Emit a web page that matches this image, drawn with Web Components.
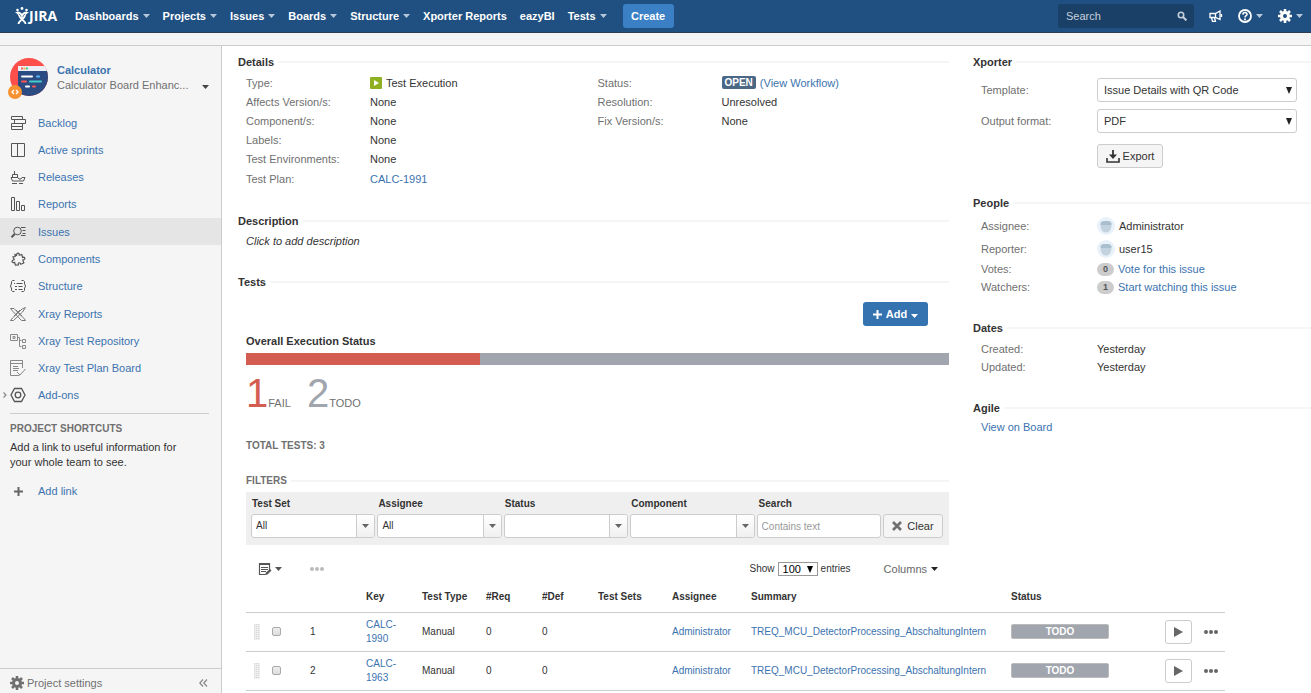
<!DOCTYPE html>
<html lang="en">
<head>
<meta charset="utf-8">
<title>Calculator - Test Execution</title>
<style>
  :root { --link: #3b73af; --text: #333; --muted: #707070; --line: #ccc; --panel: #f5f5f5; --rule: #f5f5f5; }
  body { margin: 0; font: 11px/16px "Liberation Sans", Arial, sans-serif; color: var(--text); background: #fff; }
</style>
</head>
<body>
<jira-app></jira-app>
<script>
const define = (name, html) => customElements.define(name, class extends HTMLElement {
  connectedCallback() {
    if (this.shadowRoot) return;
    const root = this.attachShadow({ mode: "open" });
    root.innerHTML = `<style>*{box-sizing:border-box} a{color:var(--link);text-decoration:none}
      button,input,select{font:inherit;color:inherit;margin:0}</style>` + (typeof html === "function" ? html(this) : html);
  }
});

/* ---------- icons ---------- */
const ICONS = {
  caret: [7, 4, '<path d="M0 0h7L3.500 4z" fill="currentColor"/>'],
  triangle: [6, 7, '<path d="M0 0h6L3 7z" fill="currentColor"/>'],
  backlog: [16, 16, '<path d="M1.500 1.500h11v3h-11zM4.500 4.500h11v4h-11zM1.500 8.500h11v3h-11zM1.500 11.500h11v3h-11z"/>'],
  board: [16, 16, '<path d="M1.500 1.500h13v13h-13zM7.500 1.500v13"/>'],
  ship: [16, 16, '<path d="M4.500 2v3M2.500 8.500V5.500h5v3M1 8.500h7l1 1.500h2l1-1.500h3l-1.500 3.500H2.500zM2 14.500h5M9 14.500h4"/>'],
  bars: [16, 16, '<path d="M1.500 1.500h3v13h-3zM6.500 5.500h3v9h-3zM11.500 9.500h3v5h-3z"/>'],
  issues: [16, 16, '<circle cx="7.500" cy="7" r="3.800"/><path d="M4.700 10L1.500 13.200" stroke-width="2"/><path d="M11 3.500h4.500M12.500 6.500h3M12.500 9.500h3M11 11.500h4.500"/>'],
  puzzle: [16, 16, '<path d="M5 3.500l1.500.8L7 2.500a1.300 1.300 0 0 1 2 0l.3 1.800 2.500-.8.800 3 1.200-.3a1.300 1.300 0 0 1 .5 2.300l-1.500.5 1 3-3 1.300-.6-1.200a1.200 1.200 0 0 0-2 .5l.2 1.400-3 .2-.7-2.700-1.500.2a1.300 1.300 0 0 1-.5-2.400l1.500-.6-1.200-2.900 2.200-.3z" stroke-width="1.200"/>'],
  structure: [16, 16, '<path d="M4.500 2.500h-2l-1 1v2.500l-.800 1v2l.8 1v2.500l1 1h2M11.500 2.500h2l1 1v2.500l.8 1v2l-.8 1v2.500l-1 1h-2M6.500 5.500h6M8.500 8.500h4M8.500 11.500h4M4 5.500h1M5 8.500h2M5 11.500h2"/>'],
  xray: [16, 16, '<g stroke="#777"><path d="M.500 2.500h3.500L14.500 13l1 1.500h-4L3 5.500zM15.500 1.500L12 3 2.500 12l-2 2.500h3L12.500 6z"/><path d="M6 4l6 6M4 10l6-6"/></g>'],
  repo: [16, 16, '<g stroke="#888"><path d="M.500 1.500h7v6h-7zM3 3.500h2v2H3zM7.500 4.500h2v9h2M9.500 7.500h2M12.500 6.500h3v3h-3zM12.500 12.500h3v3h-3z"/></g>'],
  plan: [16, 16, '<g stroke="#888"><path d="M12.500 8V.500H.500v15h9M.500 3.500h12M3 6.500h5M3 8.500h6M3 10.500h5M7 12l3 3 5.500-6"/></g>'],
  addons: [16, 16, '<path d="M4.500 1.500h7l3.500 6.500-3.500 6.500h-7L1 8z" stroke-width="1.300"/><circle cx="8" cy="8" r="2.800" stroke-width="1.300"/>'],
  gear: [14, 14, '<circle cx="7" cy="7" r="3.500" stroke="currentColor" stroke-width="3"/><g stroke="currentColor" stroke-width="2.600"><path d="M7 0v3M7 11v3M0 7h3M11 7h3M2 2l2 2M10 10l2 2M12 2l-2 2M4 10l-2 2"/></g>'],
  plus: [9, 9, '<path d="M4.500 0v9M0 4.500h9" stroke="currentColor" stroke-width="2"/>'],
  cross: [10, 10, '<path d="M1 1l8 8M9 1L1 9" stroke="currentColor" stroke-width="2.600"/>'],
  search: [10, 10, '<circle cx="4" cy="4" r="2.700" stroke="currentColor" stroke-width="1.600"/><path d="M6 6l3.400 3.400" stroke="currentColor" stroke-width="2"/>'],
  horn: [14, 12, '<path d="M1 3.500h5.500L11 1v8.500L6.500 7.500H1zM2.500 7.500l1 4h3l-1-4M6.500 3.500v4M12.500 4v3" stroke="currentColor" stroke-width="1.300"/>'],
  help: [14, 14, '<circle cx="7" cy="7" r="6" stroke="currentColor" stroke-width="1.800"/><path d="M4.900 5.600C5 2.700 9.300 3 9 5.500 8.800 6.800 7 6.700 7 8.500" stroke="currentColor" stroke-width="1.600"/><path d="M6.100 9.600h1.800v1.600H6.100z" fill="currentColor"/>'],
  download: [14, 13, '<path d="M1 8v4h12V8" stroke="currentColor" stroke-width="1.600"/><path d="M7 0v7" stroke="currentColor" stroke-width="1.800"/><path d="M3 4.500h8L7 9z" fill="currentColor"/>'],
  exec: [12, 12, '<rect width="12" height="12" rx="1" fill="#8eb021"/><path d="M4 3l5 3-5 3z" fill="#fff"/>'],
  avatar: [18, 18, '<circle cx="9" cy="9" r="9" fill="#e9f1fa"/><path d="M3.500 8h11c0 4-2 7.500-5.500 7.500S3.500 12 3.500 8z" fill="#c3d2df"/><path d="M3.500 8V6Q4.500 4 7 4h4q2.500 0 3.500 2v2z" fill="#a9bfce"/>'],
  play: [9, 10, '<path d="M0 0l9 5-9 5z" fill="currentColor"/>'],
  dots: [14, 4, '<g fill="currentColor"><circle cx="2" cy="2" r="2"/><circle cx="7" cy="2" r="2"/><circle cx="12" cy="2" r="2"/></g>'],
  edit: [14, 14, '<path d="M11.500 8V1.500h-10v11h6M1 2.500h11M3 5.500h7M3 7.500h7M3 9.500h5" stroke="currentColor" stroke-width="1.200"/><path d="M7 13l1-2.500L12 7l1.500 1.500-4 4z" fill="currentColor"/>'],
  grip: [6, 16, '<path d="M0 0h6v16H0z" fill="#eee"/><path d="M0 .5h6M0 2.500h6M0 4.500h6M0 6.500h6M0 8.500h6M0 10.500h6M0 12.500h6M0 14.500h6" stroke="#d6d6d6" stroke-dasharray="1 1"/>'],
  chevron: [4, 6, '<path d="M.500.500L3 3 .5 5.500" stroke="#888" stroke-width="1.200"/>'],
  collapse: [9, 8, '<path d="M4 .500L.800 4 4 7.500M8 .500L4.800 4 8 7.500" stroke="#888" stroke-width="1.200"/>'],
  project: [40, 44, `<defs><clipPath id="c"><circle cx="21" cy="20" r="19"/></clipPath></defs>
    <g clip-path="url(#c)"><path d="M0 0h42v42H0z" fill="#ff4f4a"/><path d="M10 13h32v30H10z" fill="#2a4c82"/><path d="M10 9h32v5H10z" fill="#eceff4"/></g>
    <path d="M13 11.500h2" stroke="#f66" stroke-width="2"/><path d="M15.500 11.500h2" stroke="#fa4" stroke-width="2"/><path d="M18 11.500h2" stroke="#4c9" stroke-width="2"/>
    <g stroke-width="2" stroke-linecap="round"><path d="M14 19.500h10" stroke="#fff"/><path d="M29 19.500h2" stroke="#5bf"/><path d="M14 24.500h4" stroke="#f55"/><path d="M22 24.500h11" stroke="#4cc"/><path d="M18 29.500h3" stroke="#fff"/><path d="M25 29.500h2" stroke="#f55"/></g>
    <circle cx="7" cy="35" r="7" fill="#f79232"/><path d="M6 33L4 35l2 2M8 33l2 2-2 2" stroke="#fff" stroke-width="1.300"/>`],
  logo: [14, 18, '<g stroke="#fff"><path d="M2 5.500c3 0 4.500 2 5 3.500.5-1.500 2-3.500 5-3.500M3.500 17c0-3.500 6.500-5 6.500-9M10.500 17c0-3.500-6-5-6.500-9" stroke-width="1.800"/></g><g fill="#fff"><circle cx="2.500" cy="3" r="1.300"/><circle cx="7" cy="1.500" r="1.400"/><circle cx="11.500" cy="3" r="1.300"/><path d="M0 5h3l2 4.500zM14 5h-3L9 9.500z"/></g>'],
};
define("ui-icon", el => {
  const [w, h, body] = ICONS[el.getAttribute("name")];
  return `<style>:host{display:inline-flex;flex:none}svg{display:block}</style>
  <svg width="${w}" height="${h}" viewBox="0 0 ${w} ${h}" fill="none" stroke-width="1" aria-hidden="true"><g ${/currentColor|<defs/.test(body) || /fill="#/.test(body) ? "" : 'stroke="#555"'}>${body}</g></svg>`;
});
const icon = n => `<ui-icon name="${n}"></ui-icon>`;

/* ---------- header ---------- */
define("nav-item", el => `<style>:host{display:block}
  a{display:flex;align-items:center;gap:4px;color:#fff;font-weight:bold;white-space:nowrap}
  ui-icon{color:#b5c7d9}</style>
  <a href="#"><slot></slot>${el.hasAttribute("menu") ? icon("caret") : ""}</a>`);

define("app-header", `<style>
  :host{display:block;background:#205081;border-bottom:1px solid #2e3d54;color:#fff}
  header{display:flex;align-items:center;height:32px;padding:0 8px 0 15px}
  .logo{display:flex;align-items:center;width:44px;margin-right:16px;color:#fff;font:bold 14px/18px "Open Sans","Liberation Sans",sans-serif}
  nav{display:flex;gap:13px}
  .create{height:24px;width:51px;margin-left:16px;padding:0;border:0;border-radius:3px;background:#3b7fc4;color:#fff;font-weight:bold}
  .search{display:flex;align-items:center;width:136px;height:24px;margin-left:auto;padding:0 7px 0 8px;border-radius:3px;background:#1a4067;color:#c5d0db}
  .search input{flex:1;min-width:0;padding:0;border:0;background:none;outline:0}
  .search input::placeholder{color:#c5d0db;opacity:1}
  .tool{display:flex;align-items:center;gap:4px;padding:0;border:0;background:none;color:#fff;margin-left:15px}
  .tool .c{color:#b5c7d9}
  </style>
  <header>
    <a class="logo" href="#">${icon("logo")}JIRA</a>
    <nav><nav-item menu>Dashboards</nav-item><nav-item menu>Projects</nav-item><nav-item menu>Issues</nav-item><nav-item menu>Boards</nav-item><nav-item menu>Structure</nav-item><nav-item>Xporter Reports</nav-item><nav-item>eazyBI</nav-item><nav-item menu>Tests</nav-item></nav>
    <button class="create" type="button">Create</button>
    <label class="search"><input type="text" placeholder="Search" aria-label="Search">${icon("search")}</label>
    <button class="tool" type="button" aria-label="Feedback">${icon("horn")}</button>
    <button class="tool" type="button" aria-label="Help">${icon("help")}<ui-icon class="c" name="caret"></ui-icon></button>
    <button class="tool" type="button" aria-label="Administration">${icon("gear")}<ui-icon class="c" name="caret"></ui-icon></button>
  </header>`);

/* ---------- sidebar ---------- */
define("side-item", el => `<style>
  :host{display:block}
  :host([selected]){background:#e5e5e5}
  a{position:relative;display:flex;align-items:center;gap:12px;height:100%;padding-left:10px}
  .more{position:absolute;left:3px}
  </style><a href="#">${el.hasAttribute("expandable") ? '<ui-icon class="more" name="chevron"></ui-icon>' : ""}${icon(el.getAttribute("icon"))}<slot></slot></a>`);

define("project-sidebar", `<style>
  :host{display:flex;flex-direction:column;background:var(--panel);border-right:1px solid var(--line)}
  .head{display:flex;align-items:center;padding:11px 12px 8px 8px;line-height:15px}
  .names{flex:1;min-width:0;margin-left:9px;padding-bottom:2px;color:var(--muted);white-space:nowrap}
  .names a{display:block;font-weight:bold}
  .head button{display:flex;padding:16px 0 0;border:0;background:none;color:#444}
  nav{display:grid;grid-auto-rows:1fr;height:300px}
  .short{margin:4px 12px 0 10px;padding-top:7px;border-top:1px solid var(--line)}
  h2{margin:0 0 3px;font-size:10px;line-height:16px;color:var(--muted)}
  p{margin:0;line-height:15px}
  .add{display:flex;align-items:center;gap:15px;margin-top:13px;padding-left:4px}
  .add ui-icon{color:#666}
  footer{display:flex;align-items:center;height:25px;margin-top:auto;padding:4px 13px 0 10px;border-top:1px solid var(--line);color:var(--muted)}
  footer a{display:flex;align-items:center;gap:3px;color:var(--muted)}
  footer button{display:flex;margin-left:auto;padding:0;border:0;background:none}
  </style>
  <div class="head">${icon("project")}<div class="names"><a href="#">Calculator</a>Calculator Board Enhanc...</div><button type="button" aria-label="Switch board">${icon("caret")}</button></div>
  <nav>
    <side-item icon="backlog">Backlog</side-item><side-item icon="board">Active sprints</side-item><side-item icon="ship">Releases</side-item>
    <side-item icon="bars">Reports</side-item><side-item icon="issues" selected>Issues</side-item><side-item icon="puzzle">Components</side-item>
    <side-item icon="structure">Structure</side-item><side-item icon="xray">Xray Reports</side-item><side-item icon="repo">Xray Test Repository</side-item>
    <side-item icon="plan">Xray Test Plan Board</side-item><side-item icon="addons" expandable>Add-ons</side-item>
  </nav>
  <section class="short"><h2>PROJECT SHORTCUTS</h2><p>Add a link to useful information for<br>your whole team to see.</p>
    <a class="add" href="#">${icon("plus")}Add link</a></section>
  <footer><a href="#">${icon("gear")}Project settings</a><button type="button" aria-label="Collapse sidebar">${icon("collapse")}</button></footer>`);

/* ---------- issue content ---------- */
define("issue-section", el => `<style>
  :host{display:block;margin-bottom:24px}
  h2{display:flex;align-items:center;gap:4px;margin:0 0 3px;font-size:11px;line-height:16px}
  h2::after{content:"";flex:1;height:2px;background:var(--rule)}
  .body{padding-left:8px}
  </style><h2>${el.getAttribute("heading")}</h2><div class="body"><slot></slot></div>`);

define("field-row", el => `<style>
  :host{display:flex;align-items:center;height:19px}
  :host([size="18"]){height:18px} :host([size="20"]){height:20px} :host([size="23"]){height:23px}
  .k{flex:none;width:var(--key,124px);color:var(--muted)}
  .v{display:flex;align-items:center;gap:4px;white-space:nowrap}
  </style><span class="k">${el.getAttribute("label")}</span><span class="v"><slot></slot></span>`);

define("issue-details", `<style>
  :host{display:block}
  .cols{display:grid;grid-template-columns:1fr 1fr}
  .lozenge{padding:0 3px;border-radius:2px;background:#4a6785;color:#fff;font-size:10px;font-weight:bold;line-height:13px}
  </style>
  <issue-section heading="Details"><div class="cols">
    <div><field-row label="Type:">${icon("exec")}Test Execution</field-row><field-row label="Affects Version/s:">None</field-row>
      <field-row label="Component/s:">None</field-row><field-row label="Labels:">None</field-row>
      <field-row label="Test Environments:" size="20">None</field-row><field-row label="Test Plan:" size="20"><a href="#">CALC-1991</a></field-row></div>
    <div><field-row label="Status:"><span class="lozenge">OPEN</span><a href="#">(View Workflow)</a></field-row>
      <field-row label="Resolution:">Unresolved</field-row><field-row label="Fix Version/s:">None</field-row></div>
  </div></issue-section>`);

define("execution-status", `<style>
  :host{display:block}
  .tools{display:flex;justify-content:flex-end;padding:9px 21px 7px 0}
  .add{display:flex;align-items:center;justify-content:center;gap:4px;width:65px;height:24px;padding:0;border:0;border-radius:3px;background:#3572b0;color:#fff;font-weight:bold}
  .add .c{padding-top:4px}
  h3{margin:0 0 4px;font-size:11px;line-height:16px}
  .bar{display:grid;grid-template-columns:1fr 2fr;height:12px}
  .fail{background:#d45d52}.todo{background:#a0a5ae}
  .counts{display:flex;align-items:baseline;margin-top:5px;line-height:46px;color:var(--muted)}
  .counts b{font-weight:normal;font-size:40px}
  .counts span+b{margin-left:16px}
  .f{color:#d45d52}.t{color:#a0a5ae}
  .total{margin:12px 0 0;font-size:10px;font-weight:bold;color:var(--muted)}
  </style>
  <div class="tools"><button class="add" type="button">${icon("plus")}Add<ui-icon class="c" name="caret"></ui-icon></button></div>
  <h3>Overall Execution Status</h3>
  <div class="bar"><div class="fail"></div><div class="todo"></div></div>
  <div class="counts"><b class="f">1</b><span>FAIL</span><b class="t">2</b><span>TODO</span></div>
  <p class="total">TOTAL TESTS: 3</p>`);

define("filter-select", el => `<style>
  :host{display:block;min-width:0}
  label{display:block;padding-left:1px;font-weight:bold}
  .box{display:grid;grid-template-columns:1fr 18px;height:24px;margin-top:2px;border:1px solid var(--line);border-radius:3px;background:#fff;overflow:hidden}
  select{grid-area:1/1/2/3;width:100%;appearance:none;padding:0 22px 0 4px;border:0;background:none}
  .btn{grid-area:1/2;display:flex;align-items:center;justify-content:center;border-left:1px solid var(--line);background:linear-gradient(#fff,#f0f0f0);color:#666;pointer-events:none}
  </style><label for="s">${el.getAttribute("label")}</label>
  <div class="box"><select id="s"><option>${el.getAttribute("value") || ""}</option></select><span class="btn">${icon("caret")}</span></div>`);

define("test-filters", `<style>
  :host{display:block;margin-top:19px}
  h3{display:flex;align-items:center;gap:4px;margin:0 0 3px;font-size:10px;line-height:16px;color:var(--muted)}
  h3::after{content:"";flex:1;height:2px;background:var(--rule)}
  form{display:grid;grid-template-columns:repeat(5,1fr) 60px;gap:2px;align-items:end;padding:4px 6px 7px 5px;background:#efefef;font-size:10px}
  label{display:block;padding-left:2px;font-weight:bold}
  input{display:block;width:100%;height:24px;margin-top:2px;padding:0 4px;border:1px solid var(--line);border-radius:3px;background:#fff}
  input::placeholder{color:#999;opacity:1}
  .clear{display:flex;align-items:center;justify-content:center;gap:5px;height:24px;padding:0;border:1px solid var(--line);border-radius:3px;background:#f5f5f5;font-size:11px}
  .clear ui-icon{color:#707070}
  </style>
  <h3>FILTERS</h3>
  <form><filter-select label="Test Set" value="All"></filter-select><filter-select label="Assignee" value="All"></filter-select>
    <filter-select label="Status"></filter-select><filter-select label="Component"></filter-select>
    <div><label for="q">Search</label><input id="q" type="text" placeholder="Contains text"></div>
    <button class="clear" type="button">${icon("cross")}Clear</button></form>`);

define("table-tools", `<style>
  :host{display:flex;align-items:center;height:24px;margin-top:12px;padding:0 11px 0 12px;font-size:10px}
  button{display:flex;align-items:center;padding:0;border:0;background:none;color:#555}
  .edit{gap:3px}
  .dots{margin-left:28px;color:#bbb}
  label{display:flex;align-items:center;gap:3px;margin-left:auto}
  .pick{display:grid;width:40px;height:14px;align-items:center}
  select{grid-area:1/1;width:100%;height:14px;appearance:none;padding:0 4px;border:1px solid #999;border-radius:0;background:#fff;color:#000;font-size:11px;line-height:12px}
  .pick ui-icon{grid-area:1/1;justify-self:end;margin-right:5px;color:#000;pointer-events:none}
  .columns{gap:4px;margin-left:33px;font-size:11px;color:#666}
  .columns ui-icon{color:#222}
  </style>
  <button class="edit" type="button" aria-label="Bulk edit">${icon("edit")}${icon("caret")}</button>
  <button class="dots" type="button" aria-label="More">${icon("dots")}</button>
  <label>Show <span class="pick"><select><option>100</option></select>${icon("triangle")}</span> entries</label>
  <button class="columns" type="button">Columns${icon("caret")}</button>`);

const TESTS = [["1", "CALC-<br>1990"], ["2", "CALC-<br>1963"]];
define("tests-table", `<style>
  :host{display:block}
  table{width:100%;border-collapse:collapse;table-layout:fixed;font-size:10px;line-height:14px}
  th,td{padding:0 8px;text-align:left;border-bottom:1px solid var(--line);white-space:nowrap}
  th{height:31px;padding-top:2px}
  td{height:39px}
  .pick,.act{display:flex;align-items:center}
  .pick{gap:12px}
  input{width:9px;height:9px;appearance:none;border:1px solid #aaa;border-radius:2px;background:linear-gradient(#eee,#ddd)}
  .todo{display:block;height:15px;border:1px solid #bbb;border-radius:2px;background:#a0a5ae;color:#fff;font-weight:bold;line-height:14px;text-align:center}
  .act{justify-content:flex-end;gap:12px}
  td:last-child{padding-right:7px}
  button{display:flex;align-items:center;justify-content:center;padding:0;border:0;background:none;color:#666}
  .run{width:27px;height:24px;border:1px solid var(--line);border-radius:3px}
  </style>
  <table>
    <colgroup><col style="width:56px"><col style="width:56px"><col style="width:56px"><col style="width:64px"><col style="width:56px"><col style="width:56px"><col style="width:74px"><col style="width:79px"><col><col style="width:114px"><col style="width:108px"></colgroup>
    <thead><tr><th></th><th></th><th>Key</th><th>Test Type</th><th>#Req</th><th>#Def</th><th>Test Sets</th><th>Assignee</th><th>Summary</th><th>Status</th><th></th></tr></thead>
    <tbody>${TESTS.map(([n, key]) => `<tr>
      <td><div class="pick">${icon("grip")}<input type="checkbox" aria-label="Select test ${n}"></div></td>
      <td>${n}</td><td><a href="#">${key}</a></td><td>Manual</td><td>0</td><td>0</td><td></td><td><a href="#">Administrator</a></td>
      <td><a href="#">TREQ_MCU_DetectorProcessing_AbschaltungIntern</a></td><td><span class="todo">TODO</span></td>
      <td><div class="act"><button class="run" type="button" aria-label="Run test ${n}">${icon("play")}</button><button type="button" aria-label="More for test ${n}">${icon("dots")}</button></div></td></tr>`).join("")}</tbody>
  </table>`);

define("export-panel", `<style>
  :host{display:block;padding:5px 14px 3px 0}
  .row{display:grid;grid-template-columns:116px 1fr;align-items:center;height:24px;margin-bottom:7px}
  .row label{color:var(--muted)}
  .box{display:grid;align-items:center}
  select{grid-area:1/1;width:100%;height:24px;appearance:none;padding:0 6px;border:1px solid var(--line);border-radius:3px;background:#fff}
  .box ui-icon{grid-area:1/1;justify-self:end;margin-right:5px;color:#222;pointer-events:none}
  button{display:flex;align-items:center;justify-content:center;gap:3px;width:66px;height:24px;margin:11px 0 0 116px;padding:0;border:1px solid var(--line);border-radius:3px;background:#f5f5f5}
  </style>
  <div class="row"><label for="t">Template:</label><span class="box"><select id="t"><option>Issue Details with QR Code</option></select>${icon("triangle")}</span></div>
  <div class="row"><label for="o">Output format:</label><span class="box"><select id="o"><option>PDF</option></select>${icon("triangle")}</span></div>
  <button type="button">${icon("download")}Export</button>`);

define("issue-aside", `<style>
  :host{display:block;--key:116px}
  .count{width:17px;border-radius:7px;background:#ccc;color:#555;font-size:9px;font-weight:bold;line-height:13px;text-align:center}
  </style>
  <issue-section heading="Xporter"><export-panel></export-panel></issue-section>
  <issue-section heading="People">
    <field-row label="Assignee:" size="23">${icon("avatar")}Administrator</field-row>
    <field-row label="Reporter:" size="23">${icon("avatar")}user15</field-row>
    <field-row label="Votes:" size="18"><span class="count">0</span><a href="#">Vote for this issue</a></field-row>
    <field-row label="Watchers:" size="18"><span class="count">1</span><a href="#">Start watching this issue</a></field-row>
  </issue-section>
  <issue-section heading="Dates"><field-row label="Created:">Yesterday</field-row><field-row label="Updated:" size="18">Yesterday</field-row></issue-section>
  <issue-section heading="Agile"><a href="#">View on Board</a></issue-section>`);

define("jira-app", `<style>
  :host{display:flex;flex-direction:column;min-height:100vh}
  .strip{height:13px;background:var(--panel);border-bottom:1px solid var(--line);box-sizing:border-box}
  .page{flex:1;display:grid;grid-template-columns:222px minmax(0,1fr)}
  main{display:grid;grid-template-columns:minmax(0,1fr) 338px;column-gap:24px;align-content:start;padding:8px 0 0 16px}
  .desc{line-height:18px;font-style:italic}
  .tests{margin-bottom:0}
  tests-table{grid-column:1/3;margin:0 86px 0 8px}
  </style>
  <app-header></app-header><div class="strip"></div>
  <div class="page"><project-sidebar></project-sidebar>
  <main>
    <div><issue-details></issue-details>
      <issue-section heading="Description"><div class="desc">Click to add description</div></issue-section>
      <issue-section class="tests" heading="Tests"><execution-status></execution-status><test-filters></test-filters><table-tools></table-tools></issue-section></div>
    <issue-aside></issue-aside>
    <tests-table></tests-table>
  </main></div>`);
</script>
</body>
</html>
